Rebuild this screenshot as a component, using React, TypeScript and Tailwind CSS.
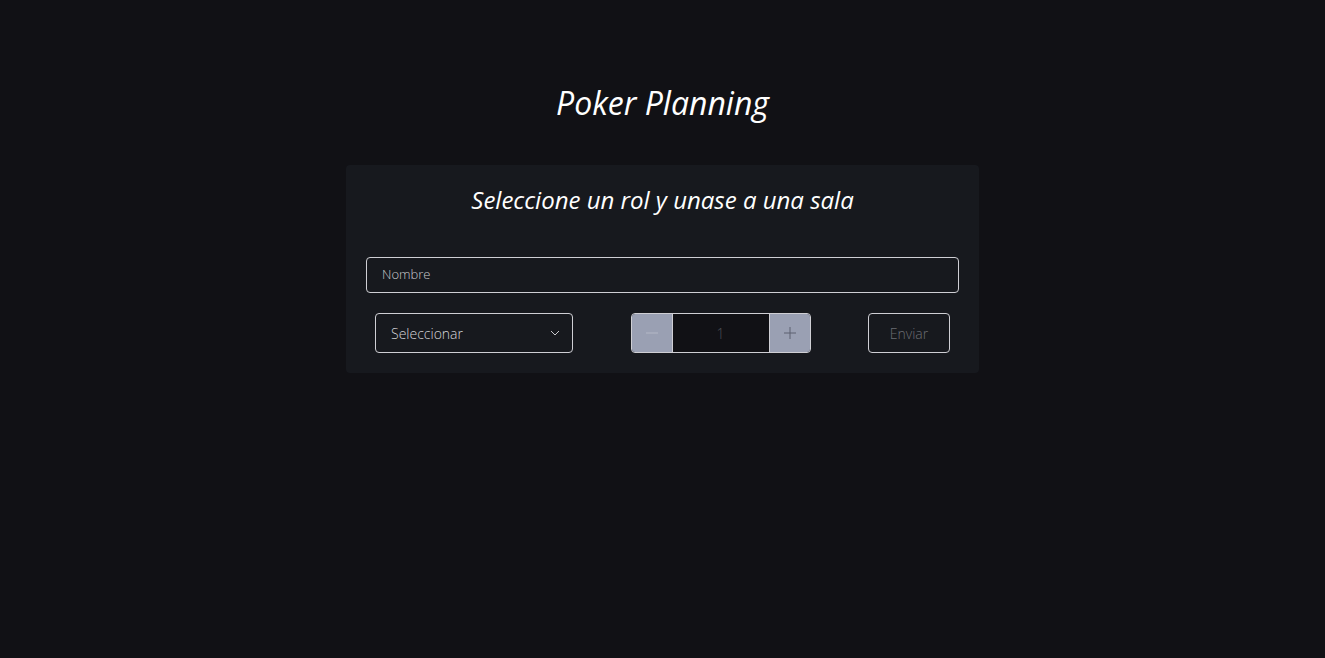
import React from "react";

export default function App() {
  return (
    <div className="min-h-[658px] w-full bg-[#111115] flex flex-col items-center" style={{ fontFamily: "'Open Sans', 'Noto Sans', sans-serif" }}>
      <h1 className="mt-[80px] text-[32px] italic text-white leading-[46px]">Poker Planning</h1>
      <div className="mt-[39px] w-[633px] bg-[#17191e] rounded-[4px] px-[20px] pt-[17px] pb-[20px]">
        <h2 className="text-center text-[24px] italic text-white leading-[36px]">Seleccione un rol y unase a una sala</h2>
        <div className="mt-[39px] h-[36px] border border-[#cfcfd4] rounded-[4px] flex items-center px-[15px]">
          <span className="text-[13px] font-light text-[#c9c9cc]">Nombre</span>
        </div>
        <div className="mt-[20px] flex justify-between px-[9px]">
          <div className="w-[198px] h-[40px] border border-[#cfcfd4] rounded-[4px] flex items-center justify-between pl-[15px] pr-[11px]">
            <span className="text-[14px] font-light text-[#d4d4d8]">Seleccionar</span>
            <svg width="12" height="12" viewBox="0 0 12 12" fill="none" stroke="#c9c9cc" strokeWidth="1">
              <path d="M2 4l4 4 4-4" />
            </svg>
          </div>
          <div className="w-[180px] h-[40px] border border-[#cfcfd4] rounded-[4px] flex overflow-hidden">
            <div className="w-[41px] bg-[#9aa0b3] flex items-center justify-center border-r border-[#cfcfd4]">
              <svg width="14" height="14" viewBox="0 0 14 14" stroke="#b4b8c6" strokeWidth="1"><path d="M1 7h12" /></svg>
            </div>
            <div className="flex-1 bg-[#111115] flex items-center justify-center text-[14px] font-light text-[#4f5157]">1</div>
            <div className="w-[41px] bg-[#9aa0b3] flex items-center justify-center border-l border-[#cfcfd4]">
              <svg width="14" height="14" viewBox="0 0 14 14" stroke="#5d6170" strokeWidth="1"><path d="M1 7h12M7 1v12" /></svg>
            </div>
          </div>
          <div className="w-[82px] h-[40px] border border-[#cfcfd4] rounded-[4px] flex items-center justify-center">
            <span className="text-[14px] font-light text-[#6b6d73]">Enviar</span>
          </div>
        </div>
      </div>
    </div>
  );
}
